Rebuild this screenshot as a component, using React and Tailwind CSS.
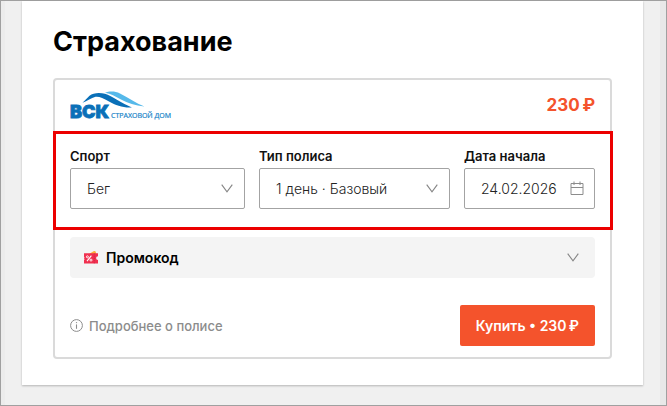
import { useState } from "react";

const SPORTS = ["Бег", "Велоспорт", "Плавание", "Лыжи"];
const POLICIES = ["1 день · Базовый", "1 день · Расширенный", "1 год · Базовый"];
// thin space between the amount and the currency sign
const PRICE = "230\u2009₽";

function Chevron({ className = "" }) {
  return (
    <svg
      viewBox="0 0 12 9"
      className={`h-[9px] w-3 ${className}`}
      fill="none"
      stroke="#858585"
      strokeWidth="1.1"
      aria-hidden="true"
    >
      <path d="M0.7 0.7 L6 7.9 L11.3 0.7" />
    </svg>
  );
}

function CalendarIcon({ className = "" }) {
  return (
    <svg
      viewBox="0 0 14 14"
      className={`h-[14px] w-[14px] ${className}`}
      fill="none"
      stroke="#8c8c8c"
      aria-hidden="true"
    >
      <path d="M1 2.5 H13 V13.5 H1 Z M1 6.5 H13 M4 0.5 V4 M10 0.5 V4" />
    </svg>
  );
}

function InfoIcon() {
  return (
    <svg viewBox="0 0 13 13" className="h-[13px] w-[13px]" aria-hidden="true">
      <circle cx="6.5" cy="6.5" r="5.9" fill="none" stroke="#8c8c8c" />
      <path d="M6.5 5.4 V9.8" stroke="#8c8c8c" strokeWidth="1.1" />
      <circle cx="6.5" cy="3.6" r="0.7" fill="#8c8c8c" />
    </svg>
  );
}

function PromoIcon() {
  return (
    <svg viewBox="0 0 14 13" className="h-[13px] w-[14px]" aria-hidden="true">
      <path d="M5 3 L9.5 0.2 Q11 -0.4 11.6 0.6 L12.4 3 Z" fill="#fbb03b" />
      <path
        d="M0 2.2 H14 V5.2 A1.9 1.9 0 0 0 14 9 V12.6 H0 V9 L0.6 8.4 L0 7.6 L0.6 6.8 L0 6 Z"
        fill="#f0304f"
      />
      <path d="M10.3 2.4 V12.4" stroke="#c81f45" strokeWidth="0.7" strokeDasharray="1.2 1" />
      <path d="M3 10.2 L7.4 4.6" stroke="#fff" strokeWidth="1.1" />
      <circle cx="3.4" cy="5.8" r="1" fill="none" stroke="#fff" strokeWidth="0.9" />
      <circle cx="7" cy="9.1" r="1" fill="none" stroke="#fff" strokeWidth="0.9" />
    </svg>
  );
}

function Logo() {
  return (
    <svg viewBox="0 0 103 34" className="-mb-[6px] h-[34px] w-[103px]" role="img" aria-label="ВСК">
      <path
        d="M35 1.8 C39 0 45 -0.1 50 2.4 C58 6.6 66 12 74.5 15.6 C65 14.6 58 12.4 51 8.6 C45 5.2 41 2.8 35 1.8 Z"
        fill="#56b9ea"
      />
      <path
        d="M12.5 11.8 L19.5 4.8 C23 1.6 30 1.2 35 2.8 C42 5.2 52 12.4 62 16.4 C53 17 46 14.2 39 10.4 C33 7.2 29 5.2 25.5 5.8 C21 7 17.5 9.8 12.5 11.8 Z"
        fill="#0a70b8"
      />
      <text
        x="0"
        y="27"
        fontSize="18"
        fontWeight="900"
        fill="#0a70b8"
        stroke="#0a70b8"
        strokeWidth="0.8"
        className="font-['Inter',sans-serif]"
      >
        ВСК
      </text>
      <text
        x="41"
        y="27"
        fontSize="7"
        fill="#1683c8"
        stroke="#1683c8"
        strokeWidth="0.2"
        className="font-['Open_Sans',sans-serif]"
      >
        СТРАХОВОЙ ДОМ
      </text>
    </svg>
  );
}

function SelectField({ id, label, options }) {
  const [value, setValue] = useState(options[0]);

  return (
    <div>
      <label htmlFor={id} className="block text-[13px] leading-5 font-semibold text-[#111]">
        {label}
      </label>
      <div className="relative mt-[2px]">
        <select
          id={id}
          value={value}
          onChange={(e) => setValue(e.target.value)}
          className="block h-[41px] w-full appearance-none rounded-[2px] border border-[#a3a3a3] bg-white pr-8 pl-4 text-sm font-light text-[#222]"
        >
          {options.map((o) => (
            <option key={o}>{o}</option>
          ))}
        </select>
        <Chevron className="pointer-events-none absolute top-4 right-3" />
      </div>
    </div>
  );
}

function App() {
  const [date, setDate] = useState("24.02.2026");
  const [promoOpen, setPromoOpen] = useState(false);

  return (
    <div className="flex min-h-screen border border-[#a0a0a0] bg-[#f0f0f0] font-['Inter',sans-serif]">
      <div className="w-1 bg-[#ececec]" />
      <main className="min-w-0 flex-1 px-[17px] pb-5">
        <div className="bg-white px-[31px] pt-[25px] pb-[26px] shadow-[0_1px_2px_rgba(0,0,0,0.25)]">
          <h1 className="text-[27px] leading-8 font-bold text-black">Страхование</h1>

          <section className="mt-5 rounded-[4px] border-2 border-[#dadada] px-[15px] pt-[11px] pb-[11px]">
            <div className="flex items-center justify-between">
              <Logo />
              <span className="text-[17px] leading-6 font-bold text-[#f4532c]">{PRICE}</span>
            </div>

            <div className="relative mt-[27px] grid grid-cols-[175fr_191fr_131fr] gap-[14px]">
              <SelectField id="sport" label="Спорт" options={SPORTS} />
              <SelectField id="policy" label="Тип полиса" options={POLICIES} />
              <div>
                <label
                  htmlFor="start"
                  className="block text-[13px] leading-5 font-semibold text-[#111]"
                >
                  Дата начала
                </label>
                <div className="relative mt-[2px]">
                  <input
                    id="start"
                    type="text"
                    value={date}
                    onChange={(e) => setDate(e.target.value)}
                    className="block h-[41px] w-full rounded-[2px] border border-[#a3a3a3] bg-white pr-8 pl-4 text-sm font-light text-[#222]"
                  />
                  <CalendarIcon className="pointer-events-none absolute top-[13px] right-[11px]" />
                </div>
              </div>
              {/* highlight frame around the policy parameters */}
              <div className="pointer-events-none absolute -top-[15px] -right-[18px] -bottom-[21px] -left-[17px] border-3 border-[#ec0000]" />
            </div>

            <button
              type="button"
              onClick={() => setPromoOpen(!promoOpen)}
              aria-expanded={promoOpen}
              className="mt-7 flex h-[41px] w-full items-center gap-2 rounded-[4px] bg-[#f4f4f4] pr-4 pl-[14px] text-sm font-semibold text-black"
            >
              <PromoIcon />
              Промокод
              <Chevron className="ml-auto" />
            </button>

            <div className="mt-[27px] flex items-center justify-between">
              <a
                href="#policy-details"
                className="flex items-center gap-[6px] text-[13px] leading-5 font-medium text-[#8c8c8c]"
              >
                <InfoIcon />
                Подробнее о полисе
              </a>
              <button
                type="button"
                className="h-[41px] rounded-[2px] bg-[#f4532c] px-4 text-sm font-semibold text-white"
              >
                Купить • {PRICE}
              </button>
            </div>
          </section>
        </div>
      </main>
      <div className="w-[6px] bg-[#e8e8e8]" />
    </div>
  );
}

export default App;
